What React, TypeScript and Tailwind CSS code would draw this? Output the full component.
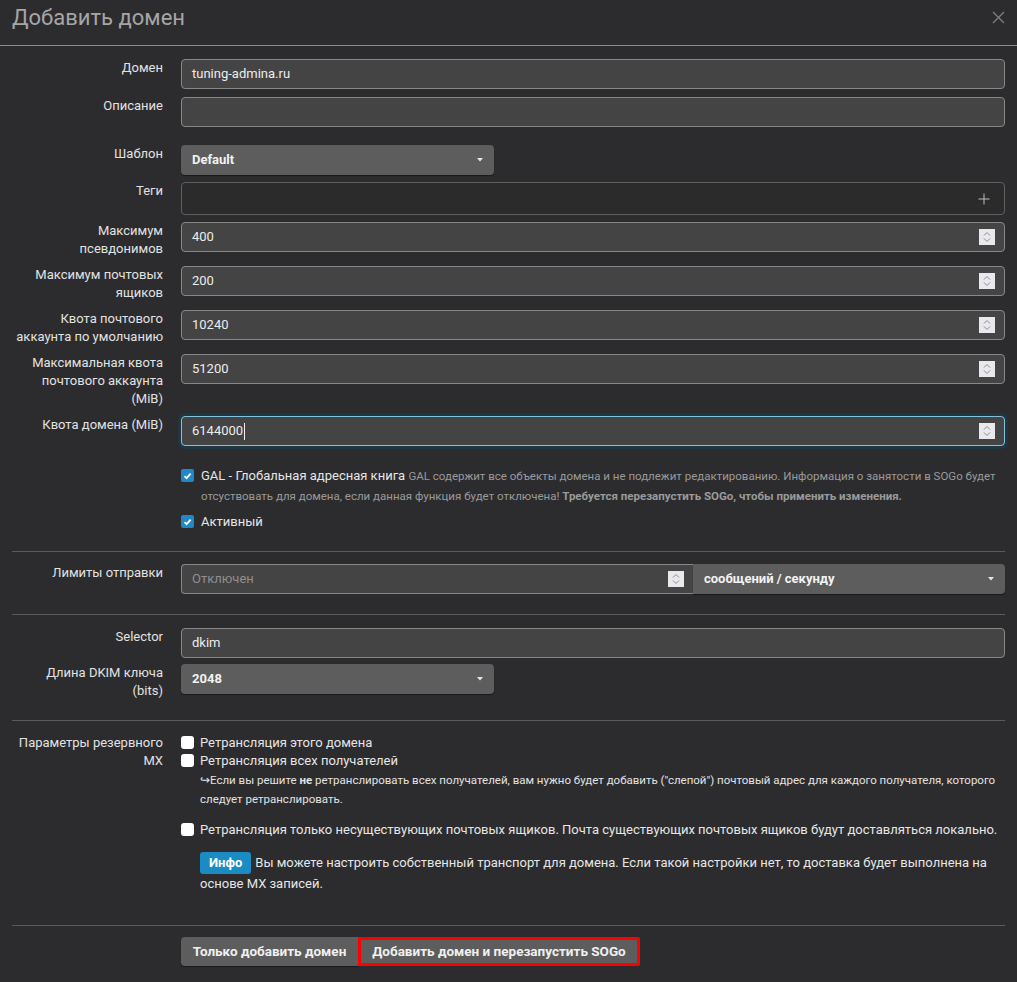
import type { ReactNode } from "react";

function Label({ children }: { children: ReactNode }) {
  return (
    <div className="w-[151px] shrink-0 text-right text-[13px] leading-[18px] text-[#e2e2e2]">
      {children}
    </div>
  );
}

function Row({
  label,
  children,
  className = "",
}: {
  label: ReactNode;
  children: ReactNode;
  className?: string;
}) {
  return (
    <div className={`flex items-start gap-[18px] ${className}`}>
      <Label>{label}</Label>
      <div className="min-w-0 flex-1">{children}</div>
    </div>
  );
}

function TextInput({ value }: { value?: string }) {
  return (
    <div className="flex h-[30px] items-center rounded-[4px] border border-[#878787] bg-[#444444] px-[10px] text-[13px] text-[#ececec]">
      {value}
    </div>
  );
}

function Spinner() {
  return (
    <div className="flex h-[16px] w-[16px] items-center justify-center bg-[#e9e9ed]">
      <svg width="10" height="12" viewBox="0 0 10 12" fill="none" stroke="#8a8a90" strokeWidth="1">
        <path d="M2 4.5 5 1.5 8 4.5" />
        <path d="M2 7.5 5 10.5 8 7.5" />
      </svg>
    </div>
  );
}

function NumberInput({ value, focused }: { value: string; focused?: boolean }) {
  return (
    <div
      className={
        focused
          ? "flex h-[30px] items-center justify-between rounded-[4px] border border-[#86c1dc] bg-[#444444] pl-[10px] pr-[9px] text-[13px] text-[#ececec] shadow-[0_0_0_3px_#1f3743]"
          : "flex h-[30px] items-center justify-between rounded-[4px] border border-[#878787] bg-[#444444] pl-[10px] pr-[9px] text-[13px] text-[#ececec]"
      }
    >
      <span className="flex items-center">
        {value}
        {focused && <span className="ml-[1px] inline-block h-[17px] w-px bg-[#f0f0f0]" />}
      </span>
      <Spinner />
    </div>
  );
}

function Caret() {
  return (
    <svg width="6" height="4" viewBox="0 0 6 4">
      <path d="M0 0h6L3 3.5z" fill="#e6e6e6" />
    </svg>
  );
}

function Select({ value, className = "" }: { value: string; className?: string }) {
  return (
    <div
      className={`flex h-[30px] items-center justify-between rounded-[4px] bg-[#5d5d5d] pl-[11px] pr-[11px] text-[13px] font-bold text-[#f2f2f2] shadow-[0_1px_1px_rgba(0,0,0,0.45)] ${className}`}
    >
      <span>{value}</span>
      <Caret />
    </div>
  );
}

function CheckedBox() {
  return (
    <span className="mt-[3px] flex h-[13px] w-[13px] shrink-0 items-center justify-center rounded-[2px] bg-[#1f88c6]">
      <svg width="9" height="8" viewBox="0 0 9 8" fill="none" stroke="#ffffff" strokeWidth="1.8">
        <path d="M1.5 4.2 3.6 6.2 7.6 1.6" />
      </svg>
    </span>
  );
}

function EmptyBox() {
  return <span className="mt-[2px] h-[13px] w-[13px] shrink-0 rounded-[3px] bg-white" />;
}

function Divider({ className = "" }: { className?: string }) {
  return <div className={`h-px bg-[#5a5a5a] ${className}`} />;
}

export default function App() {
  return (
    <div className="h-[982px] w-[1017px] overflow-hidden bg-[#2c2c2e] font-['Roboto',sans-serif] text-[#e2e2e2]">
      <header className="flex h-[46px] items-start justify-between border-b border-[#8c8c8c] pl-[12px] pr-[12px] pt-[5px]">
        <h1 className="text-[22px] font-normal leading-[26px] text-[#a6a6a6]">Добавить домен</h1>
        <svg className="mt-[6px]" width="13" height="13" viewBox="0 0 13 13" stroke="#7d7d7d" strokeWidth="1.4">
          <path d="M1 1 12 12M12 1 1 12" />
        </svg>
      </header>

      <div className="pl-[12px] pr-[12px] pt-[13px]">
        <Row label="Домен">
          <TextInput value="tuning-admina.ru" />
        </Row>
        <Row label="Описание" className="mt-[8px]">
          <TextInput />
        </Row>
        <Row label="Шаблон" className="mt-[18px]">
          <Select value="Default" className="w-[313px]" />
        </Row>
        <Row label="Теги" className="mt-[7px]">
          <div className="flex h-[33px] items-center justify-end rounded-[4px] border border-[#5f5f5f] bg-[#2b2b2b] pr-[14px]">
            <svg width="12" height="12" viewBox="0 0 12 12" stroke="#bdbdbd" strokeWidth="1">
              <path d="M6 0.5v11M0.5 6h11" />
            </svg>
          </div>
        </Row>
        <Row label={<>Максимум<br />псевдонимов</>} className="mt-[7px]">
          <NumberInput value="400" />
        </Row>
        <Row label={<>Максимум почтовых<br />ящиков</>} className="mt-[8px]">
          <NumberInput value="200" />
        </Row>
        <Row label={<>Квота почтового<br />аккаунта по умолчанию</>} className="mt-[8px]">
          <NumberInput value="10240" />
        </Row>
        <Row label={<>Максимальная квота<br />почтового аккаунта<br />(MiB)</>} className="mt-[8px]">
          <NumberInput value="51200" />
        </Row>
        <Row label="Квота домена (MiB)" className="mt-[8px]">
          <NumberInput value="6144000" focused />
        </Row>

        <Row label="" className="mt-[20px]">
          <div className="flex gap-[7px]">
            <CheckedBox />
            <p className="text-[13px] leading-[19px] text-[#e6e6e6]">
              GAL - Глобальная адресная книга{" "}
              <span className="text-[11.5px] text-[#9a9a9a]">
                GAL содержит все объекты домена и не подлежит редактированию. Информация о занятости в SOGo будет
                отсуствовать для домена, если данная функция будет отключена!{" "}
                <b className="font-bold">Требуется перезапустить SOGo, чтобы применить изменения.</b>
              </span>
            </p>
          </div>
          <div className="mt-[6px] flex gap-[7px]">
            <CheckedBox />
            <span className="text-[13px] leading-[19px] text-[#e6e6e6]">Активный</span>
          </div>
        </Row>

        <Divider className="mt-[20px]" />

        <Row label="Лимиты отправки" className="mt-[12px]">
          <div className="flex">
            <div className="flex h-[30px] w-[512px] items-center justify-between rounded-l-[4px] border border-r-0 border-[#878787] bg-[#444444] pl-[10px] pr-[9px] text-[13px] text-[#8f8f8f]">
              <span>Отключен</span>
              <Spinner />
            </div>
            <Select value="сообщений / секунду" className="flex-1 rounded-l-none" />
          </div>
        </Row>

        <Divider className="mt-[20px]" />

        <Row label="Selector" className="mt-[13px]">
          <TextInput value="dkim" />
        </Row>
        <Row label={<>Длина DKIM ключа<br />(bits)</>} className="mt-[6px]">
          <Select value="2048" className="w-[313px]" />
        </Row>

        <Divider className="mt-[20px]" />

        <Row label={<>Параметры резервного<br />MX</>} className="mt-[13px]">
          <div className="flex gap-[6px]">
            <EmptyBox />
            <span className="text-[13px] leading-[18px] text-[#e6e6e6]">Ретрансляция этого домена</span>
          </div>
          <div className="flex gap-[6px]">
            <EmptyBox />
            <span className="text-[13px] leading-[18px] text-[#e6e6e6]">Ретрансляция всех получателей</span>
          </div>
          <p className="mt-[1px] pl-[19px] text-[11.5px] leading-[19px] text-[#e2e2e2]">
            ↪Если вы решите <b className="font-bold">не</b> ретранслировать всех получателей, вам нужно будет добавить
            ("слепой") почтовый адрес для каждого получателя, которого следует ретранслировать.
          </p>
          <div className="mt-[12px] flex gap-[6px]">
            <EmptyBox />
            <span className="text-[13px] leading-[18px] text-[#e6e6e6]">
              Ретрансляция только несуществующих почтовых ящиков. Почта существующих почтовых ящиков будут доставляться
              локально.
            </span>
          </div>
          <p className="mt-[13px] pl-[19px] text-[13px] leading-[20px] text-[#e6e6e6]">
            <span className="mr-[4px] inline-block rounded-[3px] bg-[#1b8bc3] px-[9px] text-[13px] font-bold leading-[22px] text-white">
              Инфо
            </span>
            Вы можете настроить собственный транспорт для домена. Если такой настройки нет, то доставка будет выполнена на
            основе MX записей.
          </p>
        </Row>

        <Divider className="mt-[31px]" />

        <Row label="" className="mt-[11px]">
          <div className="flex">
            <button className="h-[29px] w-[177px] rounded-l-[4px] bg-[#5d5d5d] text-[13.5px] font-bold text-[#f0f0f0] shadow-[0_1px_1px_rgba(0,0,0,0.45)]">
              Только добавить домен
            </button>
            <button className="h-[29px] w-[282px] rounded-r-[2px] border-[3px] border-[#ff0000] bg-[#5d5d5d] text-[13.5px] font-bold text-[#f0f0f0]">
              Добавить домен и перезапустить SOGo
            </button>
          </div>
        </Row>
      </div>
    </div>
  );
}
